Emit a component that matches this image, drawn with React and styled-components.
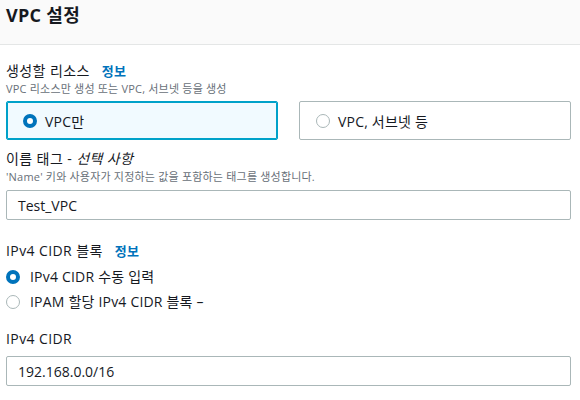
import React from 'react';
import styled, { createGlobalStyle } from 'styled-components';

const GlobalStyle = createGlobalStyle`
  body {
    margin: 0;
    background: #fff;
    font-family: 'Open Sans', 'Noto Sans CJK KR', sans-serif;
    color: #16191f;
  }
`;

const Page = styled.div`
  width: 580px;
  height: 400px;
  overflow: hidden;
`;

const Header = styled.div`
  height: 44px;
  background: #fafafa;
  border-bottom: 1px solid #e4e6e6;
  padding: 0 6px;
  display: flex;
  align-items: flex-start;
`;

const Title = styled.h2`
  margin: 3px 0 0;
  font-size: 18px;
  font-weight: 700;
  line-height: 24px;
  letter-spacing: 0.3px;
`;

const Body = styled.div`
  padding: 16px 9px 0 6px;
  display: flex;
  flex-direction: column;
`;

const Field = styled.div`
  display: flex;
  flex-direction: column;
  margin-bottom: ${p => p.$gap || 0}px;
`;

const Label = styled.div`
  font-size: 14px;
  line-height: 20px;
  letter-spacing: 0.4px;
  display: flex;
  align-items: center;
  gap: 12px;
  em { font-style: italic; }
`;

const Info = styled.span`
  color: #0073bb;
  font-weight: 700;
  font-size: 13px;
`;

const Desc = styled.div`
  font-size: 11px;
  line-height: 16px;
  letter-spacing: 0.2px;
  color: #687078;
  margin-bottom: ${p => p.$mb || 0}px;
`;

const Tiles = styled.div`
  display: grid;
  grid-template-columns: 1fr 1fr;
  gap: 21px;
`;

const Tile = styled.div`
  height: 39px;
  box-sizing: border-box;
  border-radius: 2px;
  border: ${p => (p.$active ? '1px solid #00a1c9' : '1px solid #aab7b8')};
  box-shadow: ${p => (p.$active ? 'inset 0 0 0 1px #00a1c9' : 'none')};
  background: ${p => (p.$active ? '#f1faff' : '#fff')};
  display: flex;
  align-items: center;
  padding-left: 16px;
  gap: 8px;
  font-size: 14px;
  letter-spacing: 0.2px;
`;

const Radio = styled.span`
  width: 14px;
  height: 14px;
  box-sizing: border-box;
  border-radius: 50%;
  flex-shrink: 0;
  border: ${p => (p.$checked ? '4px solid #0073bb' : '1px solid #aab7b8')};
  background: #fff;
`;

const Input = styled.div`
  height: 30px;
  box-sizing: border-box;
  border: 1px solid #aab7b8;
  border-radius: 2px;
  display: flex;
  align-items: center;
  padding-left: 11px;
  margin-top: ${p => p.$mt || 0}px;
  font-size: 14px;
`;

const Options = styled.div`
  display: flex;
  flex-direction: column;
  gap: 6px;
  margin-top: 6px;
`;

const Option = styled.div`
  display: flex;
  align-items: center;
  gap: 10px;
  font-size: 14px;
  line-height: 19px;
  letter-spacing: 0.2px;
`;

export default function App() {
  return (
    <Page>
      <GlobalStyle />
      <Header>
        <Title>VPC 설정</Title>
      </Header>
      <Body>
        <Field $gap={9}>
          <Label>생성할 리소스 <Info>정보</Info></Label>
          <Desc $mb={4}>VPC 리소스만 생성 또는 VPC, 서브넷 등을 생성</Desc>
          <Tiles>
            <Tile $active>
              <Radio $checked />
              VPC만
            </Tile>
            <Tile>
              <Radio />
              VPC, 서브넷 등
            </Tile>
          </Tiles>
        </Field>
        <Field $gap={21}>
          <Label><span>이름 태그 - <em>선택 사항</em></span></Label>
          <Desc $mb={5}>'Name' 키와 사용자가 지정하는 값을 포함하는 태그를 생성합니다.</Desc>
          <Input>Test_VPC</Input>
        </Field>
        <Field $gap={18}>
          <Label>IPv4 CIDR 블록 <Info>정보</Info></Label>
          <Options>
            <Option><Radio $checked />IPv4 CIDR 수동 입력</Option>
            <Option><Radio />IPAM 할당 IPv4 CIDR 블록 –</Option>
          </Options>
        </Field>
        <Field>
          <Label>IPv4 CIDR</Label>
          <Input $mt={7}>192.168.0.0/16</Input>
        </Field>
      </Body>
    </Page>
  );
}
